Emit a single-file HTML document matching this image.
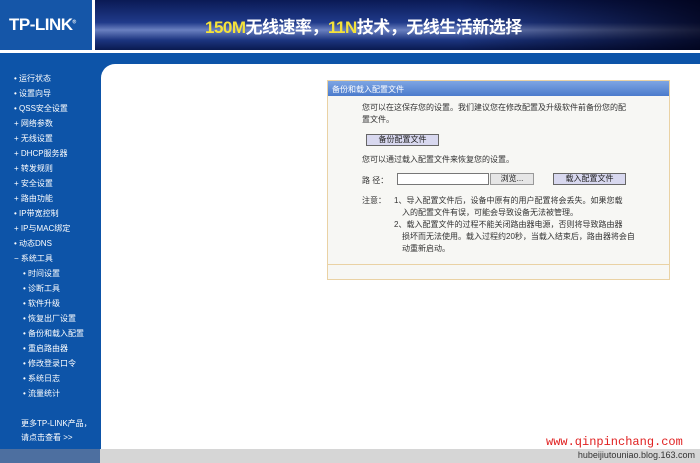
<!DOCTYPE html>
<html><head><meta charset="utf-8"><style>
*{margin:0;padding:0;box-sizing:border-box}
body{width:700px;height:463px;overflow:hidden;background:#fff;position:relative;font-family:"Liberation Sans","Noto Sans CJK SC",sans-serif;font-size:8px;color:#333}
.a{position:absolute}
#logo{left:0;top:0;width:92px;height:50px;background:#1556a8;color:#fff;font-weight:bold;font-size:17px;padding:15px 0 0 9px;letter-spacing:-0.5px}
#ban{left:95px;top:0;width:605px;height:50px;background:linear-gradient(180deg,#0a1a55 0%,#203a8a 45%,#6a80c0 60%,#1c3580 80%,#0a1a50 100%)}
#ban:after{content:"";position:absolute;left:0;top:0;right:0;bottom:0;background:linear-gradient(90deg,rgba(255,255,255,0) 0%,rgba(20,30,80,0) 60%,rgba(0,0,20,.8) 100%)}
#slogan{left:205px;top:13px;font-size:17px;color:#fff;font-weight:bold;z-index:2;letter-spacing:-0.5px}
#slogan b{color:#f4e23a}
#wl{left:0;top:50px;width:700px;height:3px;background:#fff}
#bb{left:0;top:53px;width:700px;height:396px;background:#0d54a8}
#ct{left:101px;top:64px;width:599px;height:385px;background:#fff;border-top-left-radius:14px}
.m{position:absolute;left:14px;color:#fff;font-size:8px;white-space:nowrap}
.m.s{left:23px}
#panel{left:327px;top:80px;width:343px;height:200px;background:#f7f7f4;border:1px solid #ead2a4}
#ptit{height:15px;background:linear-gradient(180deg,#7ea5e3,#4b7bcc);color:#fff;font-size:8px;padding:3px 0 0 4px}
.t{position:absolute;font-size:8px;color:#333;white-space:nowrap}
.btn{position:absolute;height:12px;background:#d8d8ef;border:1px solid #666;font-size:8px;text-align:center;line-height:10px;color:#222}
#bot{left:0;top:449px;width:700px;height:14px;background:#d6d6d6}
#botl{left:0;top:449px;width:100px;height:14px;background:#4d6fa0}
</style></head><body>
<div class="a" id="logo">TP-LINK<sup style="font-size:5px">®</sup></div>
<div class="a" id="ban"></div>
<div class="a" id="slogan"><b>150M</b>无线速率，<b>11N</b>技术，无线生活新选择</div>
<div class="a" id="wl"></div>
<div class="a" id="bb">
<div class="m" style="top:20px">• 运行状态</div>
<div class="m" style="top:35px">• 设置向导</div>
<div class="m" style="top:50px">• QSS安全设置</div>
<div class="m" style="top:65px">+ 网络参数</div>
<div class="m" style="top:80px">+ 无线设置</div>
<div class="m" style="top:95px">+ DHCP服务器</div>
<div class="m" style="top:110px">+ 转发规则</div>
<div class="m" style="top:125px">+ 安全设置</div>
<div class="m" style="top:140px">+ 路由功能</div>
<div class="m" style="top:155px">• IP带宽控制</div>
<div class="m" style="top:170px">+ IP与MAC绑定</div>
<div class="m" style="top:185px">• 动态DNS</div>
<div class="m" style="top:200px">− 系统工具</div>
<div class="m s" style="top:215px">• 时间设置</div>
<div class="m s" style="top:230px">• 诊断工具</div>
<div class="m s" style="top:245px">• 软件升级</div>
<div class="m s" style="top:260px">• 恢复出厂设置</div>
<div class="m s" style="top:275px">• 备份和载入配置</div>
<div class="m s" style="top:290px">• 重启路由器</div>
<div class="m s" style="top:305px">• 修改登录口令</div>
<div class="m s" style="top:320px">• 系统日志</div>
<div class="m s" style="top:335px">• 流量统计</div>
<div class="m" style="top:365px;left:21px">更多TP-LINK产品，</div>
<div class="m" style="top:379px;left:21px">请点击查看 &gt;&gt;</div>
</div>
<div class="a" id="ct"></div>
<div class="a" id="panel">
<div id="ptit">备份和载入配置文件</div>
<div class="t" style="left:34px;top:21px">您可以在这保存您的设置。我们建议您在修改配置及升级软件前备份您的配</div>
<div class="t" style="left:34px;top:33px">置文件。</div>
<div class="btn" style="left:38px;top:53px;width:73px">备份配置文件</div>
<div class="t" style="left:34px;top:73px">您可以通过载入配置文件来恢复您的设置。</div>
<div class="t" style="left:34px;top:94px">路 径：</div>
<div class="a" style="left:69px;top:92px;width:92px;height:12px;background:#fff;border:1px solid #777"></div>
<div class="btn" style="left:162px;top:92px;width:44px;background:#e6e6e6;border-color:#999">浏览...</div>
<div class="btn" style="left:225px;top:92px;width:73px">载入配置文件</div>
<div class="t" style="left:34px;top:114px">注意：</div>
<div class="t" style="left:66px;top:114px">1、导入配置文件后，设备中原有的用户配置将会丢失。如果您载</div>
<div class="t" style="left:74px;top:126px">入的配置文件有误，可能会导致设备无法被管理。</div>
<div class="t" style="left:66px;top:138px">2、载入配置文件的过程不能关闭路由器电源，否则将导致路由器</div>
<div class="t" style="left:74px;top:150px">损坏而无法使用。载入过程约20秒，当载入结束后，路由器将会自</div>
<div class="t" style="left:74px;top:162px">动重新启动。</div>
<div class="a" style="left:0;top:183px;width:341px;height:1px;background:#ead2a4"></div>
</div>
<div class="a" style="left:546px;top:435px;color:#e02020;font-family:'Liberation Mono',monospace;font-size:12px">www.qinpinchang.com</div>
<div class="a" id="bot"></div>
<div class="a" id="botl"></div>
<div class="a" style="right:5px;top:450px;font-size:9px;color:#333">hubeijiutouniao.blog.163.com</div>
</body></html>
